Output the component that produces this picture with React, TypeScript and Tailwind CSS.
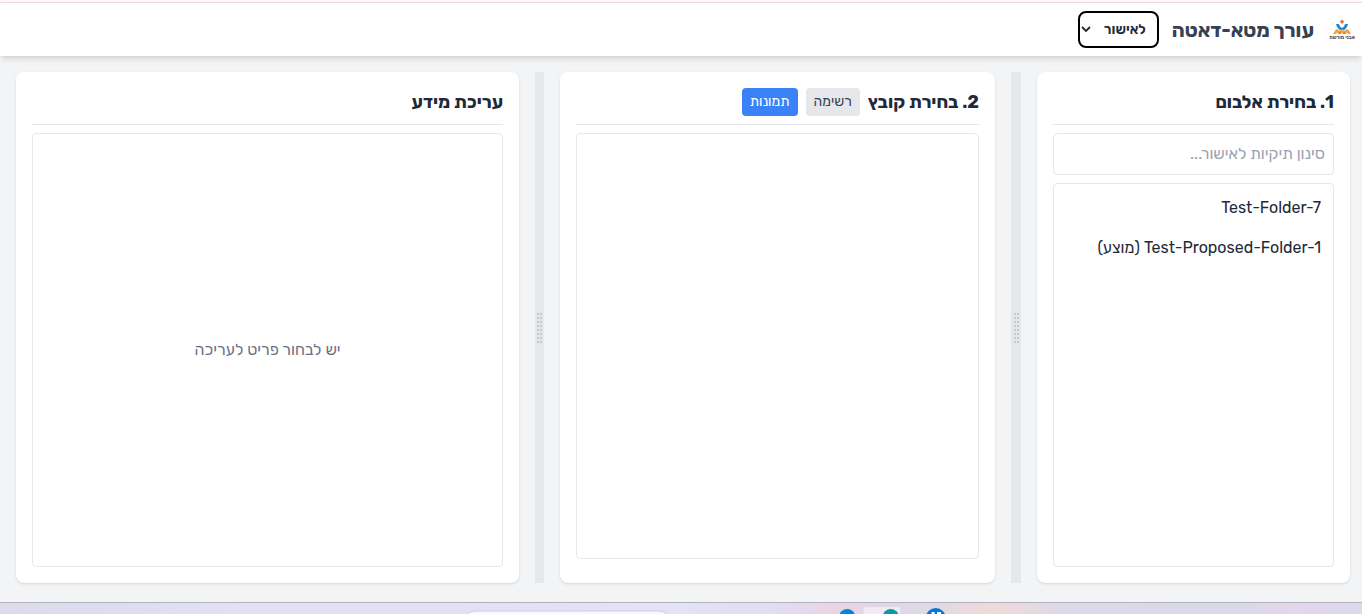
import { useState } from "react";
import type { ReactNode } from "react";
import clsx from "clsx";

interface Folder {
  name: string;
  proposed?: boolean;
}

const folders: Folder[] = [
  { name: "Test-Folder-7" },
  { name: "Test-Proposed-Folder-1", proposed: true },
];

function Logo() {
  return (
    <svg viewBox="0 0 28 24" className="h-6 w-7" role="img" aria-label="אבני מורשת">
      <path d="M15 1.6 17.2 3.8 15 6 12.8 3.8Z" fill="#ee6b3b" />
      <path d="M9 6H12L13 8.500 15 10 17 8.500 18 6H21L20 9 17 12.500 15 11.500 13 12.500 10 9Z" fill="#2288d6" />
      <path d="M6 16 8.500 12 10.500 11 12 13 15 12 18 13 19.500 11 21.500 12 24 16H21.500L20 14.500 18.500 16H16.500L15 14.500 13.500 16H11.500L10 14.500 8.500 16Z" fill="#f5a12e" />
      <path d="M11 16 13 13.500 14.500 15.200 13.500 16ZM16.500 16 15.500 15.200 17 13.500 19 16Z" fill="#ec7a3c" />
      <text x="15" y="21" textAnchor="middle" fontSize="5" fontWeight="700" fill="#6b4a36" direction="rtl">
        אבני מורשת
      </text>
    </svg>
  );
}

function Gutter() {
  return (
    <div className="flex items-center justify-center bg-gray-200" role="separator" aria-orientation="vertical">
      <div className="grid grid-cols-2 gap-x-px gap-y-[2px]">
        {Array.from({ length: 16 }, (_, i) => (
          <span key={i} className="size-[2px] bg-[#c8c8c8]" />
        ))}
      </div>
    </div>
  );
}

function Panel({ title, actions, children }: { title: string; actions?: ReactNode; children: ReactNode }) {
  return (
    <section className="flex min-w-0 flex-col rounded-lg bg-white p-4 shadow-sm">
      <div className="mb-2 flex items-center gap-2 border-b border-gray-200 pb-2">
        <h2 className="text-lg leading-7 font-bold whitespace-nowrap">{title}</h2>
        {actions}
      </div>
      {children}
    </section>
  );
}

export default function App() {
  const [view, setView] = useState("images");
  const [filter, setFilter] = useState("");

  const visibleFolders = folders.filter((folder) => folder.name.toLowerCase().includes(filter.toLowerCase()));

  return (
    <div
      dir="rtl"
      className="flex h-screen flex-col overflow-hidden bg-gray-100 font-[Rubik,'Open_Sans','Noto_Sans',sans-serif] text-gray-800"
    >
      <div className="h-[3px] shrink-0 border-b border-[#f6d8dc] bg-[#fffafa]" />

      <header className="flex h-[53px] shrink-0 items-center gap-[13px] bg-white ps-[7px] shadow-md">
        <Logo />
        <h1 className="text-xl font-bold whitespace-nowrap text-gray-700">עורך מטא-דאטה</h1>
        <div className="relative">
          <select
            aria-label="סטטוס"
            className="h-[37px] w-[81px] appearance-none rounded-lg border-2 border-black bg-white ps-[11px] text-sm font-semibold"
          >
            <option>לאישור</option>
          </select>
          <svg viewBox="0 0 10 6" className="pointer-events-none absolute end-[3px] top-[15px] h-[6px] w-[10px]" fill="none">
            <path d="M1 1 5 5 9 1" stroke="#1f2937" strokeWidth="1.800" />
          </svg>
        </div>
      </header>

      <main className="grid min-h-0 flex-1 grid-cols-[313fr_10px_435fr_9px_503fr] gap-4 ps-3 pe-4 pt-4 pb-[19px]">
        <Panel title="1. בחירת אלבום">
          <input
            type="text"
            aria-label="סינון תיקיות"
            placeholder="סינון תיקיות לאישור..."
            value={filter}
            onChange={(e) => setFilter(e.target.value)}
            className="mb-2 h-[42px] w-full rounded-sm border border-gray-200 px-2 pb-[2px] text-base placeholder:text-gray-400"
          />
          <ul className="flex-1 rounded-sm border border-gray-200 p-1">
            {visibleFolders.map((folder) => (
              <li key={folder.name}>
                <button className="w-full p-2 text-start whitespace-nowrap">
                  <bdi>{folder.name}</bdi>
                  {folder.proposed && " (מוצע)"}
                </button>
              </li>
            ))}
          </ul>
        </Panel>

        <Gutter />

        <Panel
          title="2. בחירת קובץ"
          actions={
            <>
              <button
                onClick={() => setView("list")}
                className={clsx(
                  "h-7 rounded-sm px-2 text-sm",
                  view === "list" ? "bg-[#3b82f6] text-white" : "bg-gray-200 text-gray-700"
                )}
              >
                רשימה
              </button>
              <button
                onClick={() => setView("images")}
                className={clsx(
                  "h-7 rounded-sm px-2 text-sm",
                  view === "images" ? "bg-[#3b82f6] text-white" : "bg-gray-200 text-gray-700"
                )}
              >
                תמונות
              </button>
            </>
          }
        >
          <div className="mb-2 flex-1 rounded-sm border border-gray-200" />
        </Panel>

        <Gutter />

        <Panel title="עריכת מידע">
          <div className="flex flex-1 items-center justify-center rounded-sm border border-gray-200">
            <p className="text-gray-500">יש לבחור פריט לעריכה</p>
          </div>
        </Panel>
      </main>

      <footer
        dir="ltr"
        className="h-3 shrink-0 overflow-hidden border-t border-[#b3b1bf] bg-[linear-gradient(90deg,#dedbea_0%,#dcdeed_8%,#e4e0f5_18%,#e4e2f6_50%,#e2dcee_58%,#e8d5e6_61%,#ddd8e8_67%,#efdbd9_73%,#dcd9e8_78%,#dad9e8_92%,#e6d6ea_95%,#d9daea_100%)]"
      >
        <svg className="h-[11px] w-full">
          <rect x="34%" y="8" width="208" height="40" rx="12" fill="#f8f7fd" stroke="#d0cce2" />
          <rect x="63.4%" y="4" width="37" height="30" rx="3" fill="#f2eaf2" />
          <circle cx="62.2%" cy="14" r="8" fill="#0586d0" />
          <circle cx="65.4%" cy="14" r="8" fill="#079aa5" />
          <circle cx="68.7%" cy="15" r="10" fill="#0876d6" />
          <rect x="68.4%" y="9" width="3" height="2" fill="#fff" />
          <rect x="68.8%" y="9" width="4" height="2" fill="#fff" />
        </svg>
      </footer>
    </div>
  );
}
